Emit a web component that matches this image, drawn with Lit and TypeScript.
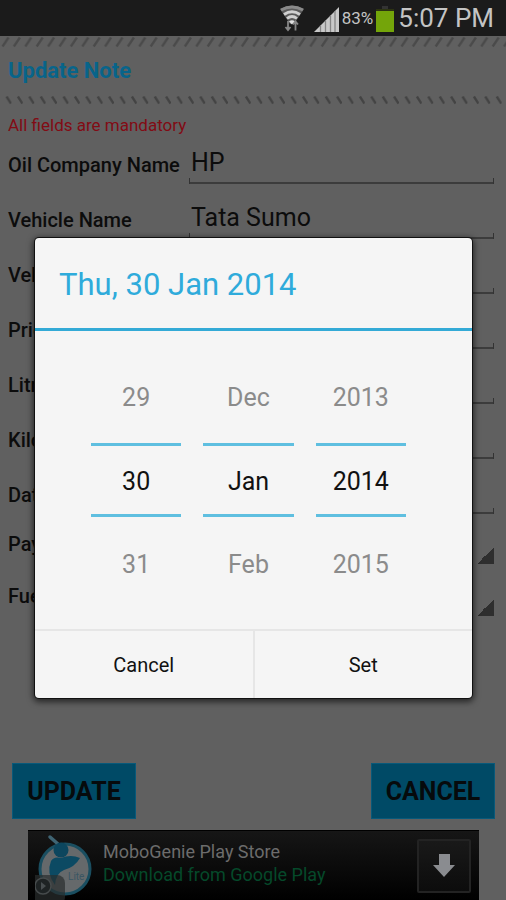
import { LitElement, html, css, svg } from "lit";
import { customElement, state } from "lit/decorators.js";

interface Field {
  id: string;
  label: string;
  value: string;
}

const FIELDS: Field[] = [
  { id: "company", label: "Oil Company Name", value: "HP" },
  { id: "vehicle", label: "Vehicle Name", value: "Tata Sumo" },
  { id: "number", label: "Veh", value: "" },
  { id: "price", label: "Price", value: "" },
  { id: "litres", label: "Litres", value: "" },
  { id: "kilometer", label: "Kilometer", value: "" },
  { id: "date", label: "Date", value: "" },
];

const SPINNERS = [
  { id: "payment", label: "Payment" },
  { id: "fuel", label: "Fuel" },
];

const MONTHS = ["Jan", "Feb", "Mar", "Apr", "May", "Jun", "Jul", "Aug", "Sep", "Oct", "Nov", "Dec"];
const DAYS = ["Sun", "Mon", "Tue", "Wed", "Thu", "Fri", "Sat"];

@customElement("status-bar")
class StatusBar extends LitElement {
  static styles = css`
    :host {
      display: flex;
      align-items: center;
      justify-content: flex-end;
      height: 36px;
      padding-right: 12px;
      background: #1b1b1b;
      color: #c4c4c4;
    }
    svg {
      display: block;
    }
    .wifi {
      margin-right: 9px;
    }
    .icon {
      align-self: flex-end;
      margin-bottom: 4px;
    }
    .percent {
      font-size: 17px;
      margin: 0 3px 0 3px;
    }
    .clock {
      font-size: 26px;
      margin-left: 4px;
    }
  `;

  render() {
    return html`
      <svg class="wifi" width="26" height="28" viewBox="0 0 26 28" aria-label="Wi-Fi">
        <path d="M1 5Q13-2 25 5L15 20H11Z" fill="#5a5a5a" />
        <g fill="none" stroke-width="2.800">
          <path d="M2 6Q13 0 24 6" stroke="#8a8a8a" />
          <path d="M5 10.500Q13 5 21 10.500" stroke="#d0d0d0" />
          <path d="M8 14.500Q13 10.500 18 14.500" stroke="#d0d0d0" />
        </g>
        <path d="M10 17.500Q13 15 16 17.500L13 20.500Z" fill="#e0e0e0" />
        <path d="M9 17v8.500M6.500 23l2.500 3 2.500-3M16.500 26.500V18M14 20.500l2.500-3 2.500 3" fill="none" stroke="#868686" stroke-width="1.800" />
      </svg>
      <svg class="icon" width="25" height="25" viewBox="0 0 25 25" aria-label="Signal">
        <path d="M0 25L25 0V25Z" fill="#c9c9c9" />
        <path d="M6.500 18.500V25M11.500 13.500V25M16.500 8.500V25M21 4V25" stroke="#858585" stroke-width="1.300" />
      </svg>
      <span class="percent">83%</span>
      <svg class="icon" width="18" height="26" viewBox="0 0 18 26" aria-label="Battery">
        <rect x="6" y="0" width="6" height="3" fill="#333" />
        <rect x="0" y="3" width="18" height="2" fill="#2c3312" />
        <rect x="0" y="5" width="18" height="21" fill="#74a50a" />
      </svg>
      <span class="clock">5:07 PM</span>
    `;
  }
}

@customElement("ad-banner")
class AdBanner extends LitElement {
  static styles = css`
    :host {
      display: flex;
      box-sizing: border-box;
      height: 70px;
      margin: 0 27px 0 28px;
      padding: 0 8px 0 7px;
      background: linear-gradient(#161616, #000);
      align-items: center;
      border-top: 1px solid #000;
      overflow: hidden;
    }
    .logo {
      flex: none;
    }
    .copy {
      flex: 1;
      margin: 0 0 6px 10px;
      font-size: 18px;
      line-height: 23px;
      white-space: nowrap;
    }
    .copy a {
      display: block;
      text-decoration: none;
      color: #6c6c6c;
    }
    .copy .link {
      color: #05492a;
    }
    .download {
      display: grid;
      place-items: center;
      width: 54px;
      height: 54px;
      padding: 0;
      border: 2px solid #232323;
      border-radius: 2px;
      background: linear-gradient(#191919, #0c0c0c);
    }
  `;

  render() {
    return html`
      <svg class="logo" width="58" height="70" viewBox="0 0 58 70" role="img" aria-label="MoboGenie">
        <circle cx="30" cy="38" r="25" fill="#65696b" stroke="#1a4e60" stroke-width="3" />
        <path d="M15 6l8 7" stroke="#3f6473" stroke-width="3.500" stroke-linecap="round" />
        <circle cx="26" cy="19" r="7.500" fill="#0c465e" />
        <path d="M16 30Q19 25 26 27Q36 23 45 27Q40 36 29 39Q21 42 20 54Q11 42 16 30Z" fill="#0c4a63" />
        <text x="33" y="49" font-size="10" fill="#3a5663">Lite</text>
        <rect x="-8" y="44" width="38" height="30" rx="8" fill="#2a2d2e" opacity="0.700" />
        <circle cx="8" cy="55" r="8" fill="#1e2324" stroke="#464b4c" stroke-width="1.500" />
        <path d="M6 51l5 4-5 4z" fill="#484e50" />
      </svg>
      <div class="copy">
        <a href="#">MoboGenie Play Store</a>
        <a class="link" href="#">Download from Google Play</a>
      </div>
      <button class="download" aria-label="Download">
        <svg width="22" height="23" viewBox="0 0 22 23">
          <path d="M6 0h11v11h5L11 23 0 11h6z" fill="#8a8c90" />
        </svg>
      </button>
    `;
  }
}

@customElement("date-dialog")
class DateDialog extends LitElement {
  @state() private date = new Date(2014, 0, 30);

  static styles = css`
    :host {
      display: flex;
      flex-direction: column;
      width: 100%;
      max-width: 437px;
      background: #f5f5f5;
      border-radius: 4px;
      overflow: hidden;
      box-shadow: 0 0 0 1px #111, 0 2px 6px 2px rgba(0, 0, 0, 0.6);
    }
    h2 {
      margin: 0;
      height: 90px;
      padding: 0 24px;
      font-size: 31px;
      font-weight: 400;
      line-height: 94px;
      color: #2fabdb;
      border-bottom: 3px solid #33aad6;
    }
    .picker {
      display: flex;
      gap: 22px;
      padding: 19px 66px 19px 56px;
    }
    .column {
      flex: 1;
      min-width: 0;
      display: flex;
      flex-direction: column;
    }
    button,
    input {
      font: inherit;
      margin: 0;
      border: 0;
      background: none;
      border-radius: 0;
      text-align: center;
    }
    .step {
      height: 93px;
      padding: 2px 0 0;
      font-size: 25px;
      color: #8b8b8b;
    }
    .value {
      box-sizing: border-box;
      width: 100%;
      height: 74px;
      padding: 2px 0 0;
      font-size: 25px;
      color: #111;
      border-top: 3px solid #5fbfe0;
      border-bottom: 3px solid #5fbfe0;
    }
    .actions {
      display: flex;
      border-top: 2px solid #e6e6e6;
    }
    .actions button {
      flex: 1;
      height: 67px;
      font-size: 20px;
      color: #111;
    }
    .actions button + button {
      border-left: 2px solid #e6e6e6;
    }
  `;

  private shifted(unit: string, by: number) {
    const d = new Date(this.date);
    if (unit === "Day") d.setDate(d.getDate() + by);
    if (unit === "Month") {
      d.setDate(1);
      d.setMonth(d.getMonth() + by);
      const last = new Date(d.getFullYear(), d.getMonth() + 1, 0).getDate();
      d.setDate(Math.min(this.date.getDate(), last));
    }
    if (unit === "Year") d.setFullYear(d.getFullYear() + by);
    return d;
  }

  private text(unit: string, d: Date) {
    if (unit === "Day") return String(d.getDate());
    if (unit === "Month") return MONTHS[d.getMonth()];
    return String(d.getFullYear());
  }

  private column(unit: string) {
    const before = this.shifted(unit, -1);
    const after = this.shifted(unit, 1);
    return html`
      <div class="column">
        <button class="step" @click=${() => (this.date = before)}>${this.text(unit, before)}</button>
        <input class="value" aria-label=${unit} readonly .value=${this.text(unit, this.date)} />
        <button class="step" @click=${() => (this.date = after)}>${this.text(unit, after)}</button>
      </div>
    `;
  }

  render() {
    const d = this.date;
    return html`
      <h2>${DAYS[d.getDay()]}, ${d.getDate()} ${MONTHS[d.getMonth()]} ${d.getFullYear()}</h2>
      <div class="picker">${["Day", "Month", "Year"].map((unit) => this.column(unit))}</div>
      <div class="actions">
        <button>Cancel</button>
        <button>Set</button>
      </div>
    `;
  }
}

@customElement("app-root")
class AppRoot extends LitElement {
  static styles = css`
    :host {
      display: flex;
      flex-direction: column;
      position: relative;
      min-height: 100vh;
      font-family: Roboto, "Liberation Sans", sans-serif;
      background: #606060;
      color: #0c0c0c;
    }
    .hatch {
      display: block;
      width: 100%;
      height: 12px;
    }
    h1 {
      margin: 0;
      padding: 0 8px;
      font-size: 22px;
      line-height: 46px;
      color: #08648a;
    }
    .note {
      margin: 0;
      padding: 3px 8px 0;
      font-size: 17px;
      line-height: 32px;
      color: #820b14;
    }
    form {
      flex: 1;
      display: flex;
      flex-direction: column;
    }
    .fields {
      display: grid;
      gap: 8px;
      padding: 0 12px 0 8px;
    }
    .spinners {
      display: grid;
      padding: 0 12px 0 8px;
    }
    .row {
      display: grid;
      grid-template-columns: 181px 1fr;
      height: 47px;
    }
    .spinners .row {
      height: 52px;
    }
    label {
      align-self: center;
      font-size: 20px;
      font-weight: 500;
      white-space: nowrap;
    }
    .box {
      box-sizing: border-box;
      width: 100%;
      min-width: 0;
      height: 43px;
      padding: 0 2px;
      border: 0;
      font: inherit;
      font-size: 25px;
      color: #0c0c0c;
      background: linear-gradient(#333, #333) left bottom / 1px 6px no-repeat,
        linear-gradient(#333, #333) right bottom / 1px 6px no-repeat,
        linear-gradient(#3c3c3c, #3c3c3c) left bottom / 100% 2px no-repeat;
    }
    .spinner {
      appearance: none;
      width: 100%;
      height: 46px;
      border: 0;
      border-radius: 0;
      background: linear-gradient(135deg, transparent 50%, #2e2e2e 50%) right bottom / 17px 17px no-repeat;
    }
    .buttons {
      display: flex;
      justify-content: space-between;
      margin-top: auto;
      padding: 0 11px 11px 12px;
    }
    .buttons button {
      height: 56px;
      min-width: 124px;
      padding: 0 13px;
      border: 1px solid #08597a;
      background: #004a66;
      font: inherit;
      font-size: 25px;
      font-weight: 700;
      color: #060a0c;
    }
    .overlay {
      position: absolute;
      inset: 36px 0 0;
      display: grid;
      place-items: center;
      padding: 0 34px 0 35px;
    }
  `;

  private hatch(id: string, path: string, opacity: number) {
    return html`
      <svg class="hatch" aria-hidden="true">
        ${svg`
          <defs>
            <pattern id=${id} width="11.400" height="12" patternUnits="userSpaceOnUse">
              <path d=${path} stroke="#3c3c3c" stroke-width="2.400" opacity=${opacity} />
            </pattern>
          </defs>
          <rect width="100%" height="12" fill=${`url(#${id})`} />
        `}
      </svg>
    `;
  }

  render() {
    return html`
      <status-bar></status-bar>
      ${this.hatch("rising", "M2.500 10.500L8.500 1.500", 0.6)}
      <h1>Update Note</h1>
      ${this.hatch("falling", "M6.500 2.500L11 9.500", 0.8)}
      <p class="note">All fields are mandatory</p>
      <form @submit=${(e: Event) => e.preventDefault()}>
        <div class="fields">
          ${FIELDS.map(
            (f) => html`
              <div class="row">
                <label for=${f.id}>${f.label}</label>
                <input class="box" id=${f.id} .value=${f.value} />
              </div>
            `
          )}
        </div>
        <div class="spinners">
          ${SPINNERS.map(
            (s) => html`
              <div class="row">
                <label for=${s.id}>${s.label}</label>
                <select class="spinner" id=${s.id}></select>
              </div>
            `
          )}
        </div>
        <div class="buttons">
          <button type="submit">UPDATE</button>
          <button type="button">CANCEL</button>
        </div>
      </form>
      <ad-banner></ad-banner>
      <div class="overlay"><date-dialog role="dialog" aria-label="Set date"></date-dialog></div>
    `;
  }
}
